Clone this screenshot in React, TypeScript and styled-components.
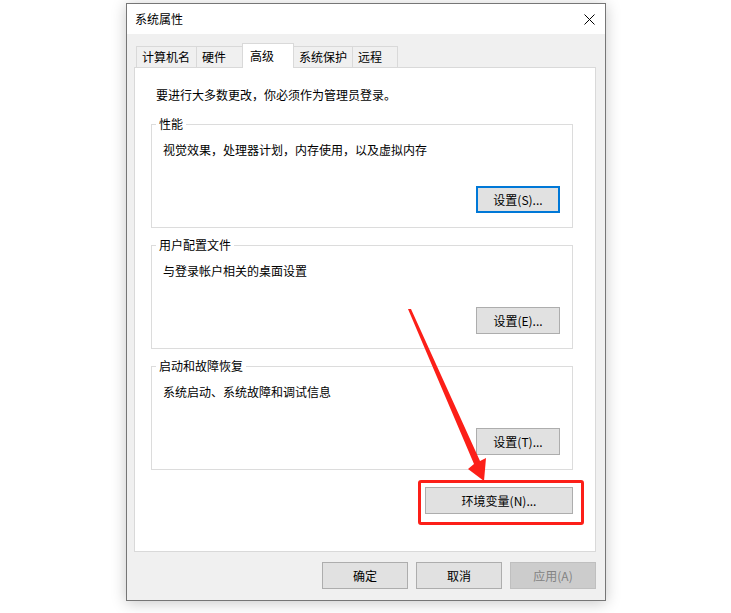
import styled, { createGlobalStyle } from 'styled-components'

const GlobalStyle = createGlobalStyle`
  html, body {
    margin: 0;
    padding: 0;
    background: #ffffff;
  }
  body {
    font-family: "Microsoft YaHei UI", "Noto Sans CJK SC", "Noto Sans", sans-serif;
    font-size: 12px;
    color: #000;
  }
`

const Desktop = styled.div`
  width: 731px;
  height: 613px;
  box-sizing: border-box;
  padding: 3px 0 0 126px;
`

const Window = styled.div`
  position: relative;
  width: 480px;
  height: 598px;
  box-sizing: border-box;
  border: 1px solid #767676;
  background: #f0f0f0;
  box-shadow: 0 2px 14px rgba(0, 0, 0, 0.22);
  display: flex;
  flex-direction: column;
`

const TitleBar = styled.div`
  height: 30px;
  background: #ffffff;
  display: flex;
  align-items: center;
  justify-content: space-between;
  padding-left: 8px;
`

const Title = styled.span`
  font-size: 12px;
  line-height: 16px;
`

const CloseBox = styled.div`
  width: 32px;
  height: 30px;
  display: flex;
  align-items: center;
  justify-content: center;
`

const TabStrip = styled.div`
  display: flex;
  align-items: flex-end;
  height: 24px;
  margin: 9px 0 0 9px;
`

const Tab = styled.div<{ $w: number; $active?: boolean }>`
  position: relative;
  width: ${({ $w }) => $w}px;
  height: ${({ $active }) => ($active ? 25 : 21)}px;
  margin-bottom: ${({ $active }) => ($active ? -1 : 0)}px;
  box-sizing: border-box;
  border: 1px solid #d9d9d9;
  border-bottom: none;
  background: ${({ $active }) => ($active ? '#ffffff' : '#f0f0f0')};
  z-index: ${({ $active }) => ($active ? 1 : 0)};
  display: flex;
  align-items: center;
  padding-left: ${({ $active }) => ($active ? 7 : 5)}px;
  line-height: 16px;

  & + & {
    margin-left: -1px;
  }
`

const Panel = styled.div`
  height: 485px;
  box-sizing: border-box;
  margin: 0 9px 0 7px;
  border: 1px solid #d9d9d9;
  background: #ffffff;
  padding: 19px 22px 0 16px;
  display: flex;
  flex-direction: column;
`

const Info = styled.div`
  margin-left: 5px;
  line-height: 16px;
`

const Group = styled.fieldset<{ $first?: boolean }>`
  margin: ${({ $first }) => ($first ? 13 : 9)}px 0 0 0;
  padding: 0;
  min-width: 0;
  border: 1px solid #dcdcdc;
`

const Legend = styled.legend`
  margin-left: 4px;
  padding: 0 3px;
  font-size: 12px;
  line-height: 16px;
`

const GroupBody = styled.div`
  height: 95px;
  box-sizing: border-box;
  padding: 10px 12px 14px 11px;
  display: flex;
  flex-direction: column;
  justify-content: space-between;
`

const GroupText = styled.div`
  line-height: 16px;
`

const Button = styled.button<{ $w?: number; $focused?: boolean }>`
  width: ${({ $w }) => $w ?? 84}px;
  height: 27px;
  box-sizing: border-box;
  padding: 0;
  align-self: flex-end;
  font-family: inherit;
  font-size: 12px;
  line-height: 16px;
  color: #000;
  background: #e1e1e1;
  border: ${({ $focused }) => ($focused ? '2px solid #0078d7' : '1px solid #adadad')};

  &:disabled {
    background: #cccccc;
    border-color: #bfbfbf;
    color: #838383;
  }
`

const EnvRow = styled.div`
  margin-top: 17px;
  display: flex;
  justify-content: flex-end;
`

const Footer = styled.div`
  display: flex;
  justify-content: flex-end;
  gap: 8px;
  padding: 10px 9px 0 0;
`

const Highlight = styled.div`
  position: absolute;
  left: 291px;
  top: 476px;
  width: 166px;
  height: 45px;
  box-sizing: border-box;
  border: 3px solid #fc1f18;
  border-radius: 3px;
  pointer-events: none;
`

const ArrowLayer = styled.svg`
  position: absolute;
  left: 0;
  top: 0;
  pointer-events: none;
`

export default function App() {
  return (
    <Desktop>
      <GlobalStyle />
      <Window>
        <TitleBar>
          <Title>系统属性</Title>
          <CloseBox>
            <svg width="11" height="11" viewBox="0 0 11 11">
              <path d="M0.5 0.5 L10.5 10.5 M10.5 0.5 L0.5 10.5" stroke="#000" strokeWidth="1" />
            </svg>
          </CloseBox>
        </TitleBar>

        <TabStrip>
          <Tab $w={61}>计算机名</Tab>
          <Tab $w={47}>硬件</Tab>
          <Tab $w={52} $active>高级</Tab>
          <Tab $w={60}>系统保护</Tab>
          <Tab $w={46}>远程</Tab>
        </TabStrip>

        <Panel>
          <Info>要进行大多数更改，你必须作为管理员登录。</Info>

          <Group $first>
            <Legend>性能</Legend>
            <GroupBody>
              <GroupText>视觉效果，处理器计划，内存使用，以及虚拟内存</GroupText>
              <Button $focused>设置(S)...</Button>
            </GroupBody>
          </Group>

          <Group>
            <Legend>用户配置文件</Legend>
            <GroupBody>
              <GroupText>与登录帐户相关的桌面设置</GroupText>
              <Button>设置(E)...</Button>
            </GroupBody>
          </Group>

          <Group>
            <Legend>启动和故障恢复</Legend>
            <GroupBody>
              <GroupText>系统启动、系统故障和调试信息</GroupText>
              <Button>设置(T)...</Button>
            </GroupBody>
          </Group>

          <EnvRow>
            <Button $w={148}>环境变量(N)...</Button>
          </EnvRow>
        </Panel>

        <Footer>
          <Button $w={86}>确定</Button>
          <Button $w={86}>取消</Button>
          <Button $w={86} disabled>应用(A)</Button>
        </Footer>

        <Highlight />
        <ArrowLayer width="478" height="596" viewBox="127 4 478 596">
          <polygon
            points="408,309 411,309 480,461 486,458 484,481 468,469 474,464"
            fill="#fc1f18"
          />
        </ArrowLayer>
      </Window>
    </Desktop>
  )
}
